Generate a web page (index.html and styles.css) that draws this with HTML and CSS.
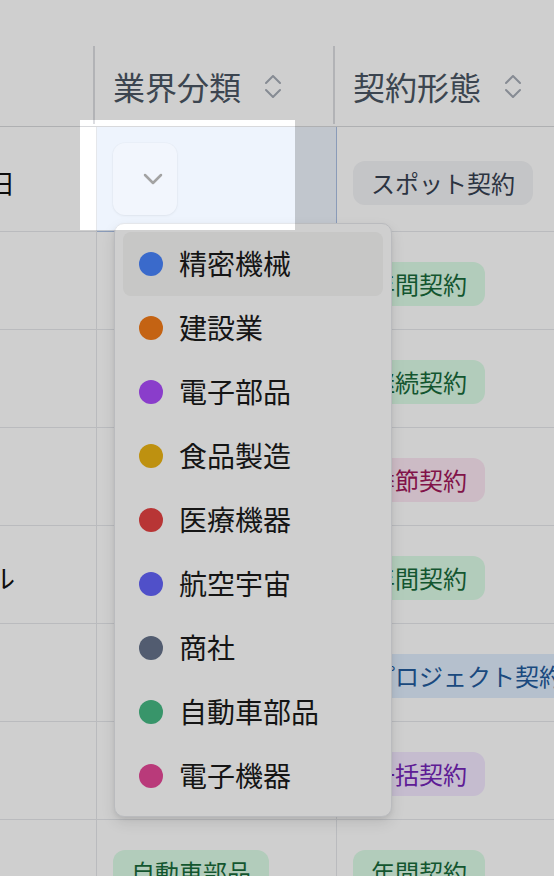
FILE: index.html
```html
<!DOCTYPE html>
<html lang="ja">
<head>
<meta charset="utf-8">
<title>取引先一覧</title>
<link rel="stylesheet" href="styles.css">
</head>
<body>
<div class="screen">
  <div class="table">
    <div class="th"></div>
    <div class="th"><span>業界分類</span><svg class="sort" viewBox="0 0 16 23" width="16" height="23"><path d="M1 8 L8 1 L15 8 M1 15 L8 22 L15 15"/></svg></div>
    <div class="th"><span>契約形態</span><svg class="sort" viewBox="0 0 16 23" width="16" height="23"><path d="M1 8 L8 1 L15 8 M1 15 L8 22 L15 15"/></svg></div>

    <div class="td"><span class="txt">毎週金曜日</span></div>
    <div class="td sel"><button class="trigger" type="button"><svg class="chev" viewBox="0 0 20 12" width="20" height="12"><path d="M2 2 L10 10 L18 2"/></svg></button></div>
    <div class="td"><span class="tag gray">スポット契約</span></div>

    <div class="td"></div>
    <div class="td"></div>
    <div class="td"><span class="tag green">年間契約</span></div>

    <div class="td"></div>
    <div class="td"></div>
    <div class="td"><span class="tag green">継続契約</span></div>

    <div class="td"></div>
    <div class="td"></div>
    <div class="td"><span class="tag pink">季節契約</span></div>

    <div class="td"><span class="txt">電子メール</span></div>
    <div class="td"></div>
    <div class="td"><span class="tag green">年間契約</span></div>

    <div class="td"></div>
    <div class="td"></div>
    <div class="td"><span class="tag blue">プロジェクト契約</span></div>

    <div class="td"></div>
    <div class="td"></div>
    <div class="td"><span class="tag purple">一括契約</span></div>

    <div class="td"></div>
    <div class="td"><span class="tag green">自動車部品</span></div>
    <div class="td"><span class="tag green">年間契約</span></div>
  </div>

  <div class="menu">
    <div class="item active"><span class="dot d-blue"></span><span>精密機械</span></div>
    <div class="item"><span class="dot d-orange"></span><span>建設業</span></div>
    <div class="item"><span class="dot d-purple"></span><span>電子部品</span></div>
    <div class="item"><span class="dot d-yellow"></span><span>食品製造</span></div>
    <div class="item"><span class="dot d-red"></span><span>医療機器</span></div>
    <div class="item"><span class="dot d-indigo"></span><span>航空宇宙</span></div>
    <div class="item"><span class="dot d-slate"></span><span>商社</span></div>
    <div class="item"><span class="dot d-green"></span><span>自動車部品</span></div>
    <div class="item"><span class="dot d-pink"></span><span>電子機器</span></div>
  </div>

  <div class="spotlight"></div>
</div>
</body>
</html>
```

FILE: styles.css
```css
* { box-sizing: border-box; }

body {
  margin: 0;
  background: #fff;
  font-family: "Noto Sans CJK JP", "Noto Sans", sans-serif;
}

.screen {
  position: relative;
  width: 554px;
  height: 876px;
  overflow: hidden;
  background: #fff;
}

.table {
  display: grid;
  grid-template-columns: 228px 240px 260px;
  grid-template-rows: 81px 105px repeat(7, 98px);
  margin-left: -131px;
  padding-top: 46px;
}

.th {
  position: relative;
  display: flex;
  align-items: center;
  gap: 24px;
  padding: 0 16px;
  border-bottom: 1px solid #d8d9dc;
  font-size: 32px;
  line-height: 1.2;
  color: #4b5563;
  white-space: nowrap;
}

.th::after {
  content: "";
  position: absolute;
  right: 2px;
  top: 0;
  bottom: 2px;
  width: 2px;
  background: #dcdde1;
}

.sort {
  flex: none;
  fill: none;
  stroke: #a6acb6;
  stroke-width: 2;
  stroke-linecap: round;
  stroke-linejoin: round;
}

.td {
  display: flex;
  align-items: center;
  padding: 0 16px;
  border-right: 1px solid #e5e7eb;
  border-bottom: 1px solid #e5e7eb;
  white-space: nowrap;
}

.td.sel {
  background: #eef4fd;
  border-right-color: #aabfe3;
  border-bottom-color: #aabfe3;
  box-shadow: 0 -1px 0 #aabfe3;
}

.txt {
  margin-top: 7px;
  font-size: 26px;
  line-height: 1.2;
  color: #111;
}

.trigger {
  display: flex;
  align-items: center;
  justify-content: flex-end;
  width: 64px;
  height: 72px;
  padding: 0 14px 0 0;
  border: 0;
  border-radius: 12px;
  background: #f2f6fd;
  box-shadow: 0 1px 3px rgba(0, 0, 0, 0.05), 0 0 0 1px rgba(0, 0, 0, 0.015);
}

.chev {
  fill: none;
  stroke: #a3a3a3;
  stroke-width: 2.5;
  stroke-linecap: round;
  stroke-linejoin: round;
}

.tag {
  display: inline-flex;
  align-items: center;
  height: 44px;
  margin-top: 7px;
  padding: 0 18px;
  border-radius: 12px;
  font-size: 24px;
  line-height: 1;
}

.tag.gray { background: #f2f3f5; color: #374151; }
.tag.green { background: #dcfce7; color: #186a3b; }
.tag.pink { background: #fce7f3; color: #a0185a; }
.tag.blue { background: #dfedfd; color: #225a9c; }
.tag.purple { background: #f3e8ff; color: #7424b8; }

.menu {
  position: absolute;
  left: 114px;
  top: 223px;
  width: 278px;
  padding: 8px;
  border: 1px solid #e5e7eb;
  border-radius: 10px;
  background: #fff;
  box-shadow: 0 6px 14px rgba(0, 0, 0, 0.10), 0 2px 4px rgba(0, 0, 0, 0.06);
}

.item {
  display: flex;
  align-items: center;
  gap: 16px;
  height: 64px;
  padding: 0 16px;
  border-radius: 8px;
  font-size: 28px;
  line-height: 1.2;
  color: #1a1a1a;
}

.item.active { background: #f5f5f4; }

.dot {
  flex: none;
  width: 24px;
  height: 24px;
  border-radius: 50%;
}

.d-blue { background: #4883fb; }
.d-orange { background: #f27a18; }
.d-purple { background: #aa4cfa; }
.d-yellow { background: #ebb314; }
.d-red { background: #e34242; }
.d-indigo { background: #6363f8; }
.d-slate { background: #65728a; }
.d-green { background: #45b883; }
.d-pink { background: #e44897; }

.spotlight {
  position: absolute;
  left: 80px;
  top: 120px;
  width: 215px;
  height: 110px;
  box-shadow: 0 0 0 1400px rgba(0, 0, 0, 0.19);
  pointer-events: none;
}
```
